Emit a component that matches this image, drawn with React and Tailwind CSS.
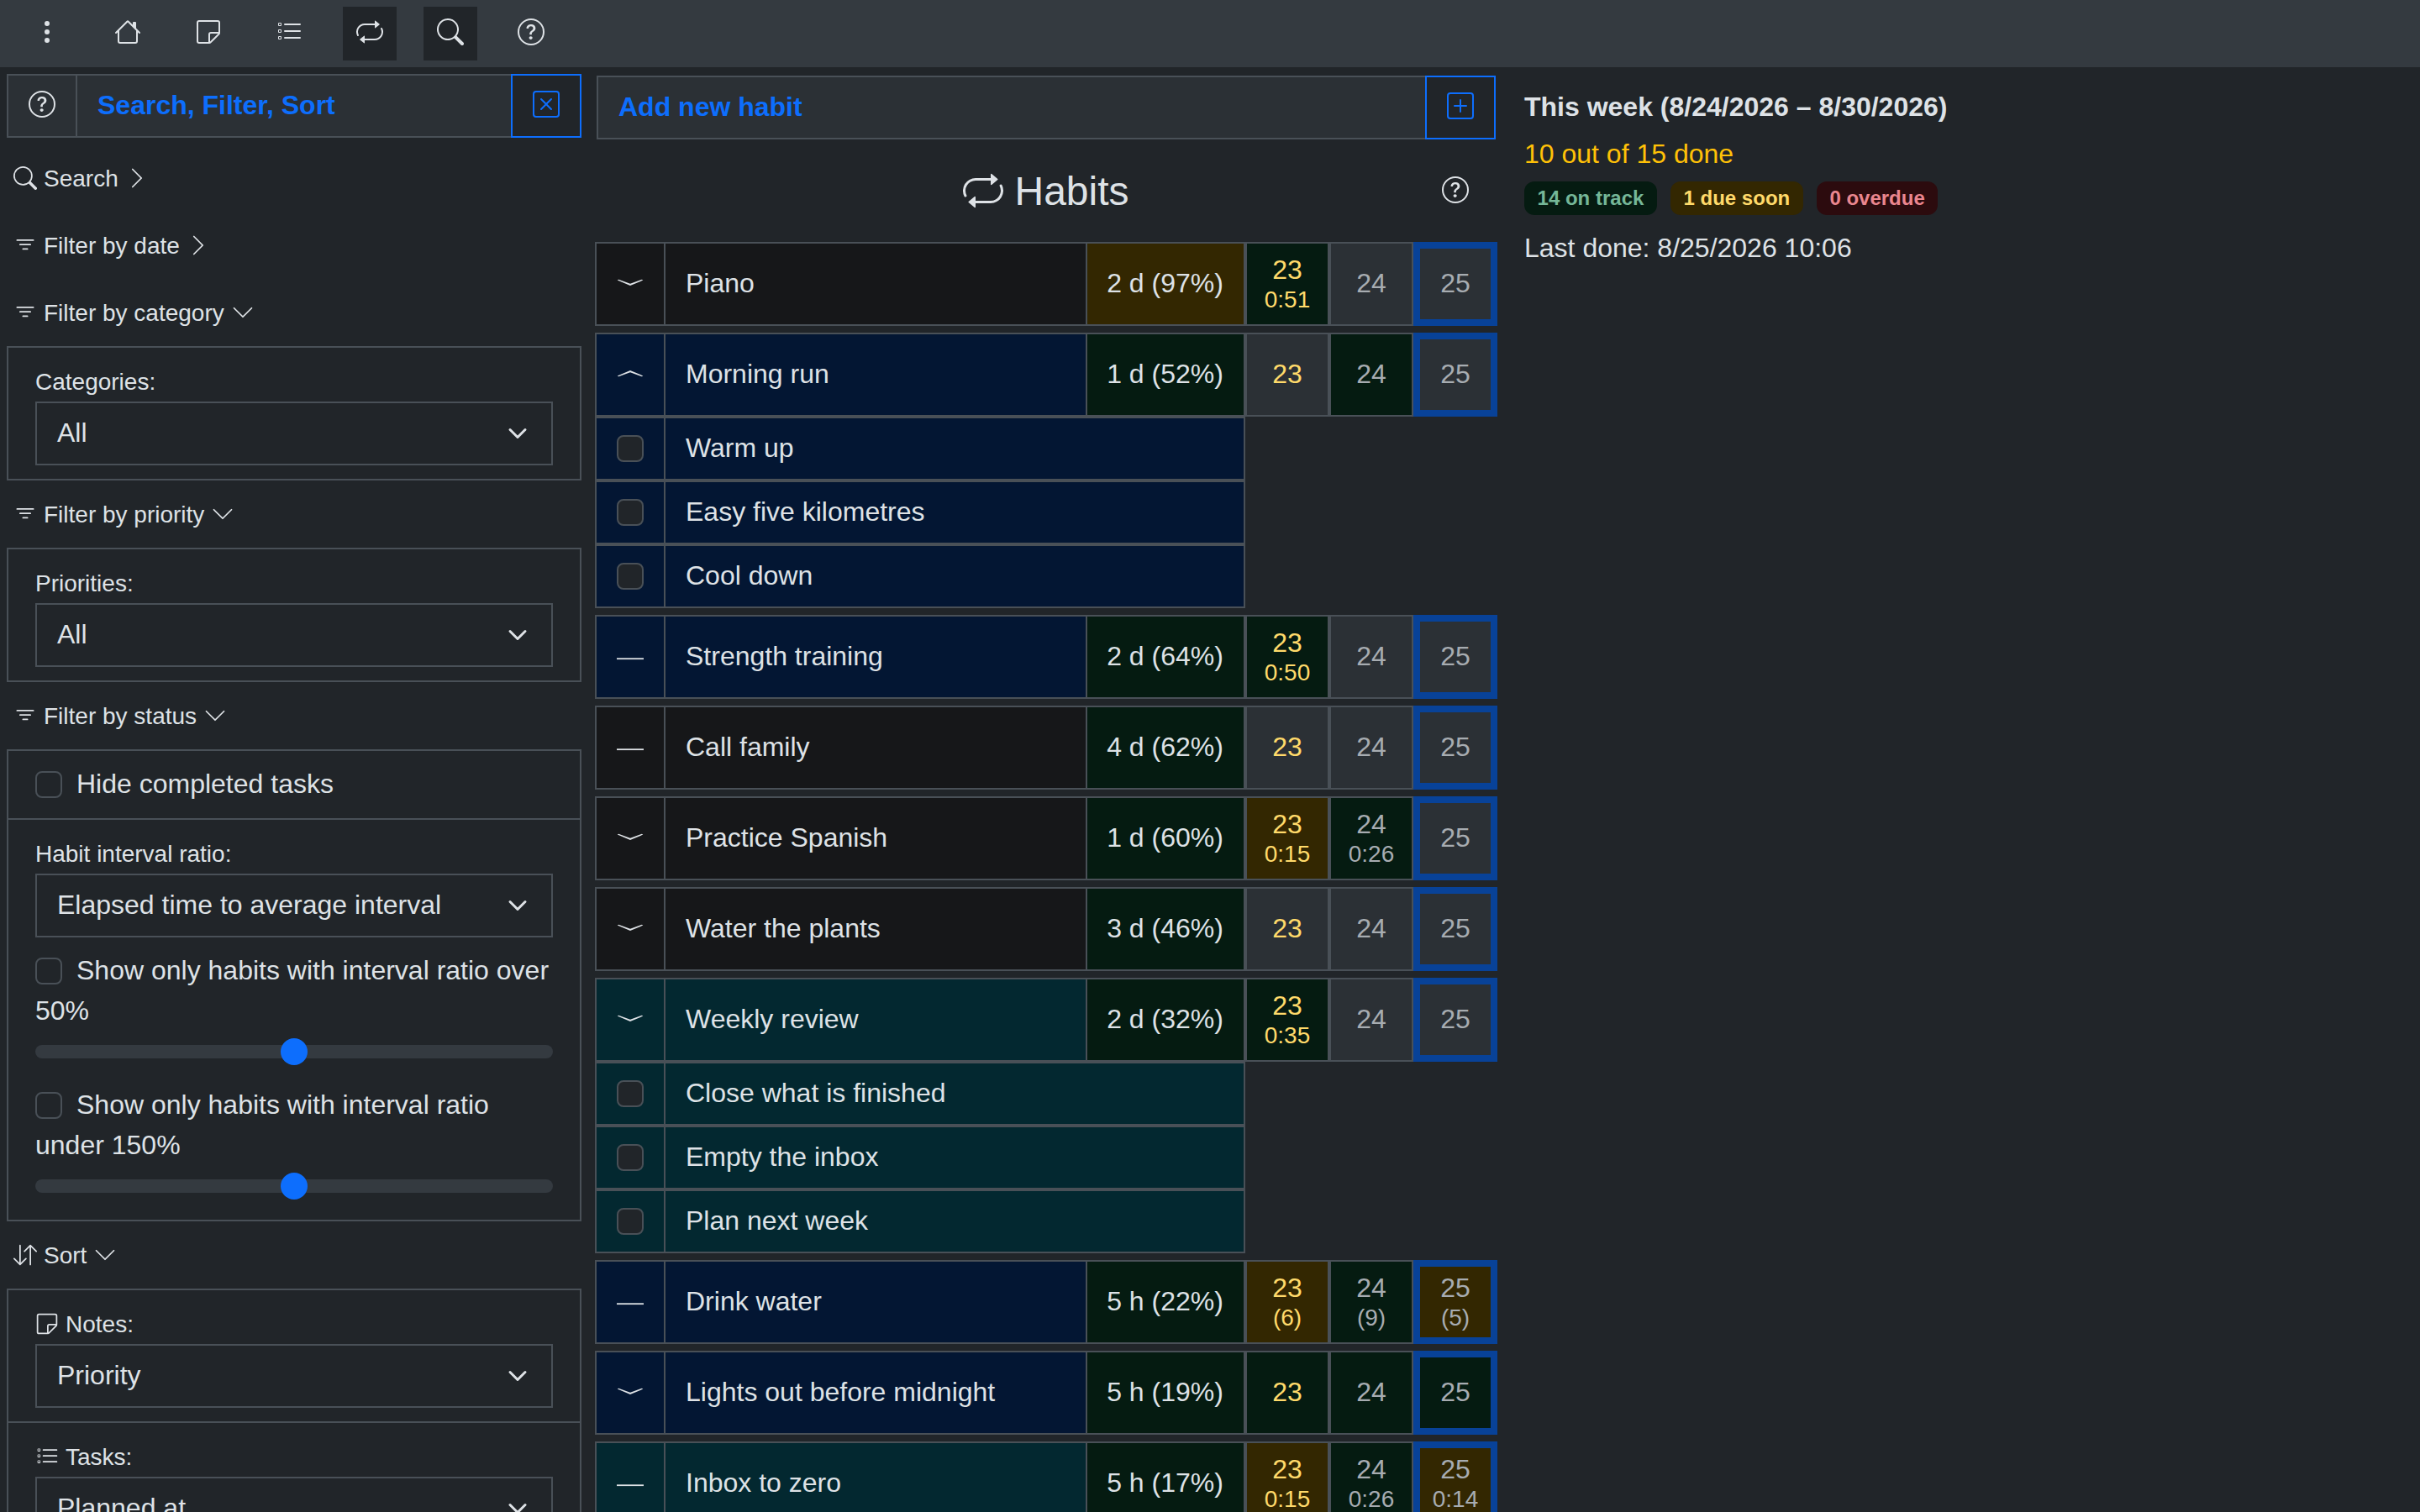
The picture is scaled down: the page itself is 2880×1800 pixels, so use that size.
import React from 'react';
import {
  BsArrowDownUp,
  BsChevronDown,
  BsChevronRight,
  BsFilter,
  BsHouse,
  BsListTask,
  BsPlusSquare,
  BsQuestionCircle,
  BsRepeat,
  BsSearch,
  BsSticky,
  BsThreeDotsVertical,
  BsXSquare,
} from 'react-icons/bs';

const navItems = [
  { name: 'menu', icon: BsThreeDotsVertical },
  { name: 'home', icon: BsHouse },
  { name: 'notes', icon: BsSticky },
  { name: 'tasks', icon: BsListTask },
  { name: 'habits', icon: BsRepeat, active: true },
  { name: 'search', icon: BsSearch, active: true },
  { name: 'help', icon: BsQuestionCircle },
];

const rowColors = {
  none: 'bg-[#161719]',
  blue: 'bg-[#031633]',
  cyan: 'bg-[#032830]',
};

const cellColors = {
  none: 'bg-[#2b3035]',
  green: 'bg-[#051b11]',
  yellow: 'bg-[#332701]',
};

const habits = [
  {
    name: 'Piano', color: 'none', toggle: 'down', ratio: '2 d (97%)', ratioColor: 'yellow',
    days: [{ day: 23, note: '0:51', color: 'green' }, { day: 24 }, { day: 25 }],
  },
  {
    name: 'Morning run', color: 'blue', toggle: 'up', ratio: '1 d (52%)',
    days: [{ day: 23 }, { day: 24, color: 'green' }, { day: 25 }],
    items: ['Warm up', 'Easy five kilometres', 'Cool down'],
  },
  {
    name: 'Strength training', color: 'blue', toggle: 'none', ratio: '2 d (64%)',
    days: [{ day: 23, note: '0:50', color: 'green' }, { day: 24 }, { day: 25 }],
  },
  {
    name: 'Call family', color: 'none', toggle: 'none', ratio: '4 d (62%)',
    days: [{ day: 23 }, { day: 24 }, { day: 25 }],
  },
  {
    name: 'Practice Spanish', color: 'none', toggle: 'down', ratio: '1 d (60%)',
    days: [{ day: 23, note: '0:15', color: 'yellow' }, { day: 24, note: '0:26', color: 'green' }, { day: 25 }],
  },
  {
    name: 'Water the plants', color: 'none', toggle: 'down', ratio: '3 d (46%)',
    days: [{ day: 23 }, { day: 24 }, { day: 25 }],
  },
  {
    name: 'Weekly review', color: 'cyan', toggle: 'down', ratio: '2 d (32%)',
    days: [{ day: 23, note: '0:35', color: 'green' }, { day: 24 }, { day: 25 }],
    items: ['Close what is finished', 'Empty the inbox', 'Plan next week'],
  },
  {
    name: 'Drink water', color: 'blue', toggle: 'none', ratio: '5 h (22%)',
    days: [
      { day: 23, note: '(6)', color: 'yellow' },
      { day: 24, note: '(9)', color: 'green' },
      { day: 25, note: '(5)', color: 'yellow' },
    ],
  },
  {
    name: 'Lights out before midnight', color: 'blue', toggle: 'down', ratio: '5 h (19%)',
    days: [{ day: 23, color: 'green' }, { day: 24, color: 'green' }, { day: 25, color: 'green' }],
  },
  {
    name: 'Inbox to zero', color: 'cyan', toggle: 'none', ratio: '5 h (17%)',
    days: [
      { day: 23, note: '0:15', color: 'yellow' },
      { day: 24, note: '0:26', color: 'green' },
      { day: 25, note: '0:14', color: 'yellow' },
    ],
  },
];

const Navbar = () => (
  <nav className="flex h-20 shrink-0 items-center gap-8 bg-[#343a40] px-6">
    {navItems.map(({ name, icon: Icon, active }) => (
      <button
        key={name}
        aria-label={name}
        className={`flex size-16 items-center justify-center pb-1 ${active ? 'bg-[#212529]' : ''}`}
      >
        <Icon className="size-8" />
      </button>
    ))}
  </nav>
);

const Checkbox = () => (
  <span className="inline-block size-8 shrink-0 rounded-lg border-2 border-[#495057] bg-[#212529] align-middle" />
);

const Section = ({ icon: Icon, title, open, children }) => {
  const Chevron = open ? BsChevronDown : BsChevronRight;
  return (
    <section>
      <button className="flex h-20 w-full items-center gap-2 px-2 text-[28px]">
        <Icon className="size-7" />
        <span className="pt-0.5">{title}</span>
        <Chevron className="size-7" />
      </button>
      {open && <div className="divide-y-2 divide-[#495057] border-2 border-[#495057]">{children}</div>}
    </section>
  );
};

const Select = ({ icon: Icon, label, value }) => (
  <div>
    <div className="flex h-12 items-center gap-2 text-[28px]">
      {Icon && <Icon className="size-7" />}
      <span className="pt-0.5">{label}</span>
    </div>
    <div className="flex h-[76px] items-center justify-between border-2 border-[#495057] px-6">
      <span className="pb-0.5">{value}</span>
      <svg className="h-6 w-8" viewBox="0 0 16 16" fill="none">
        <path d="m2 5 6 6 6-6" stroke="currentColor" strokeWidth="2" strokeLinecap="round" strokeLinejoin="round" />
      </svg>
    </div>
  </div>
);

const RatioFilter = ({ text }) => (
  <div className="pt-[15px]">
    <div className="mb-px flow-root">
      <span className="float-left mt-[9px] mr-[17px] flex">
        <Checkbox />
      </span>
      {text}
    </div>
    <div className="flex h-12 items-center">
      <div className="flex h-4 w-full items-center justify-center rounded-lg bg-[#343a40]">
        <span className="size-8 shrink-0 rounded-full bg-[#0d6efd]" />
      </div>
    </div>
  </div>
);

const FilterPanel = () => (
  <aside className="w-[684px] shrink-0 pt-2">
    <div className="mb-2 flex h-[76px]">
      <button className="flex w-[84px] items-center justify-center border-2 border-[#495057] bg-[#2b3035] pb-1">
        <BsQuestionCircle className="size-8" />
      </button>
      <div className="flex flex-1 items-center border-y-2 border-[#495057] bg-[#2b3035] px-6 pb-0.5 font-bold text-[#0d6efd]">
        Search, Filter, Sort
      </div>
      <button className="flex w-[84px] items-center justify-center border-2 border-[#0d6efd] pb-1 text-[#0d6efd]">
        <BsXSquare className="size-8" />
      </button>
    </div>
    <Section icon={BsSearch} title="Search" />
    <Section icon={BsFilter} title="Filter by date" />
    <Section icon={BsFilter} title="Filter by category" open>
      <div className="px-8 py-4">
        <Select label="Categories:" value="All" />
      </div>
    </Section>
    <Section icon={BsFilter} title="Filter by priority" open>
      <div className="px-8 py-4">
        <Select label="Priorities:" value="All" />
      </div>
    </Section>
    <Section icon={BsFilter} title="Filter by status" open>
      <div className="flex h-[82px] items-center gap-[17px] px-8">
        <Checkbox />
        <span className="pb-0.5">Hide completed tasks</span>
      </div>
      <div className="px-8 py-4">
        <Select label="Habit interval ratio:" value="Elapsed time to average interval" />
        <RatioFilter text="Show only habits with interval ratio over 50%" />
        <RatioFilter text="Show only habits with interval ratio under 150%" />
      </div>
    </Section>
    <Section icon={BsArrowDownUp} title="Sort" open>
      <div className="px-8 py-4">
        <Select icon={BsSticky} label="Notes:" value="Priority" />
      </div>
      <div className="px-8 py-4">
        <Select icon={BsListTask} label="Tasks:" value="Planned at" />
      </div>
    </Section>
  </aside>
);

const togglePaths = {
  down: 'M.7 11.6l1.5-.8L16 15.8l13.8-5 1.5.8L16 18z',
  up: 'M.7 17.4l1.5.8L16 13.2l13.8 5 1.5-.8L16 11z',
  none: 'M0 17.3h32v1.8H0z',
};

const ToggleIcon = ({ type }) => (
  <svg className="size-8" viewBox="0 0 32 32" fill="currentColor">
    <path d={togglePaths[type]} />
  </svg>
);

const DayCell = ({ day, note, color = 'none' }) => (
  <div
    className={`flex w-[100px] flex-col items-center justify-center gap-0.5 ${cellColors[color]} ${
      day === 25 ? 'border-8 border-[#084298]' : 'border-2 border-[#495057]'
    } ${day === 23 ? 'text-[#ffda6a]' : 'text-[#a7acb1]'}`}
  >
    <span className={note ? 'leading-9' : 'pb-0.5'}>{day}</span>
    {note && <span className="text-[28px] leading-8">{note}</span>}
  </div>
);

const HabitRow = ({ habit }) => {
  const color = rowColors[habit.color];
  return (
    <div>
      <div className="flex h-[100px]">
        <button className={`flex w-[84px] items-center justify-center border-2 border-[#495057] ${color}`}>
          <ToggleIcon type={habit.toggle} />
        </button>
        <div className={`flex w-[500px] items-center border-y-2 border-[#495057] px-6 pb-0.5 ${color}`}>
          {habit.name}
        </div>
        <div
          className={`flex w-[190px] items-center justify-center border-2 border-[#495057] pr-px pb-0.5 ${
            cellColors[habit.ratioColor || 'green']
          }`}
        >
          {habit.ratio}
        </div>
        {habit.days.map((d) => (
          <DayCell key={d.day} {...d} />
        ))}
      </div>
      {habit.items?.map((item) => (
        <div key={item} className={`flex h-[76px] w-[774px] border-2 border-[#495057] ${color}`}>
          <span className="flex w-[82px] items-center justify-center border-r-2 border-[#495057]">
            <Checkbox />
          </span>
          <span className="flex items-center px-6 pb-0.5">{item}</span>
        </div>
      ))}
    </div>
  );
};

const HabitList = () => (
  <main className="w-[1074px] shrink-0 pt-2.5">
    <div className="mx-0.5 flex h-[76px]">
      <div className="flex flex-1 items-center border-2 border-r-0 border-[#495057] bg-[#2b3035] px-6 pb-0.5 font-bold text-[#0d6efd]">
        Add new habit
      </div>
      <button className="flex w-[84px] items-center justify-center border-2 border-[#0d6efd] pb-1 text-[#0d6efd]">
        <BsPlusSquare className="size-8" />
      </button>
    </div>
    <div className="flex h-[122px] items-center pr-2">
      <h1 className="flex flex-1 items-center justify-center gap-[13px] pl-[92px] text-5xl">
        <BsRepeat className="size-12" />
        <span className="pt-0.5">Habits</span>
      </h1>
      <button className="flex w-[84px] items-center justify-center pb-0.5">
        <BsQuestionCircle className="size-8" />
      </button>
    </div>
    <div className="flex flex-col gap-2">
      {habits.map((habit) => (
        <HabitRow key={habit.name} habit={habit} />
      ))}
    </div>
  </main>
);

const Summary = () => (
  <section className="pt-[23px]">
    <div className="font-bold">This week (8/24/2026 – 8/30/2026)</div>
    <div className="mt-2 text-[#ffc107]">10 out of 15 done</div>
    <div className="mt-[9px] flex gap-4 text-2xl font-bold">
      <span className="flex h-10 items-center rounded-xl bg-[#051b11] px-[15.6px] text-[#75b798]">14 on track</span>
      <span className="flex h-10 items-center rounded-xl bg-[#332701] px-[15.6px] text-[#ffda6a]">1 due soon</span>
      <span className="flex h-10 items-center rounded-xl bg-[#2c0b0e] px-[15.6px] text-[#ea868f]">0 overdue</span>
    </div>
    <div className="mt-[15px]">Last done: 8/25/2026 10:06</div>
  </section>
);

const App = () => (
  <div className="flex h-screen flex-col overflow-hidden bg-[#212529] font-['Liberation_Sans',Arial,sans-serif] text-[32px] leading-12 text-[#dee2e6]">
    <Navbar />
    <div className="flex min-h-0 flex-1 px-2">
      <FilterPanel />
      <div className="ml-4 flex gap-8">
        <HabitList />
        <Summary />
      </div>
    </div>
  </div>
);

export default App;
